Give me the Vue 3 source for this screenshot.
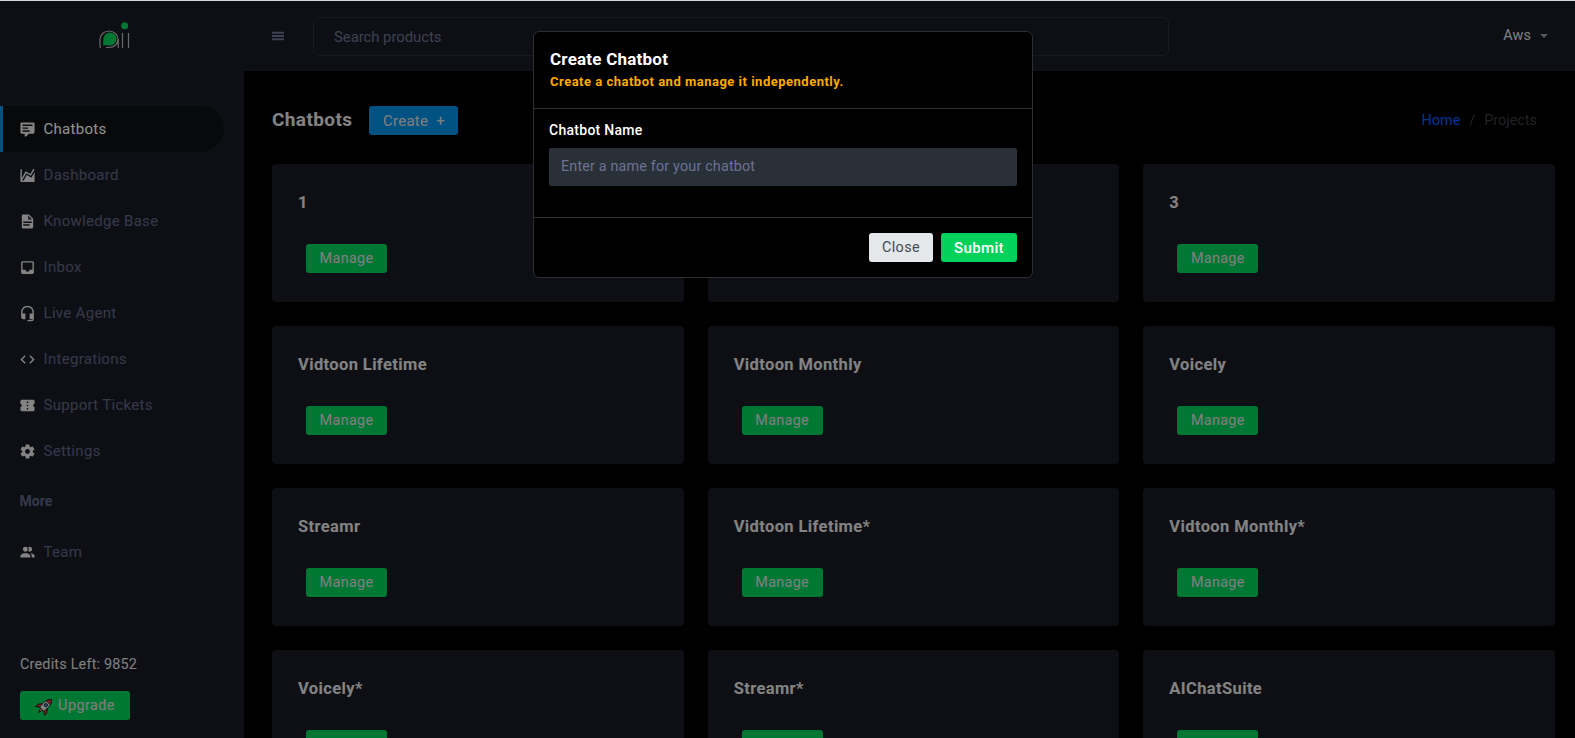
<template>
  <div class="page">
    <aside class="sidebar">
      <div class="brand">
        <svg class="logo" width="32" height="28" viewBox="0 0 32 28">
          <path d="M2.500 26 C1.500 23 2 20 2 17.500 A9 8.500 0 0 1 20 17.500 C20 22 16 25.500 11 25.500 H8 M20.300 17 V26 M24.500 11 V26 M30.500 11 V26" fill="none" stroke="#b8b8b8" stroke-width="1.200" />
          <path d="M5 23.500 L5.500 17 A6.500 6.500 0 1 1 12 23.500 C9.500 23.500 8 23 5 23.500 Z" fill="#00d25b" />
          <circle cx="26.700" cy="3.700" r="3.500" fill="#00d25b" />
        </svg>
      </div>
      <nav class="nav">
        <a v-for="item in mainNav" :key="item.label" class="nav-item" :class="{ active: item.active }">
          <svg class="nav-icon" viewBox="0 0 24 24"><path :d="item.icon" /></svg>
          <span>{{ item.label }}</span>
        </a>
        <p class="nav-heading">More</p>
        <a class="nav-item team">
          <svg class="nav-icon" viewBox="0 0 24 24"><path :d="teamIcon" /></svg>
          <span>Team</span>
        </a>
      </nav>
      <div class="credits">
        <p>Credits Left: 9852</p>
        <button class="btn btn-green upgrade">
          <svg width="20" height="20" viewBox="0 0 24 24">
            <g transform="rotate(45 12 12)" stroke="#111" stroke-width="0.900">
              <path d="M10 17 H14 L12 23 Z" fill="#f39a2b" />
              <path d="M8.500 11 L4.500 16.500 V20.500 L9 17 Z" fill="#d8343a" />
              <path d="M15.500 11 L19.500 16.500 V20.500 L15 17 Z" fill="#d8343a" />
              <path d="M12 1 C16 5 16.500 10 15.500 17.500 H8.500 C7.500 10 8 5 12 1 Z" fill="#e2e4ea" />
              <path d="M12 1 C13.800 2.800 15 4.500 15.500 6.500 H8.500 C9 4.500 10.200 2.800 12 1 Z" fill="#d8343a" />
              <circle cx="12" cy="10.500" r="2" fill="#3b78c2" />
            </g>
          </svg>
          Upgrade
        </button>
      </div>
    </aside>

    <div class="main">
      <header class="topbar">
        <svg class="menu-icon" viewBox="0 0 24 24"><path d="M3,5.500H21V8.500H3V5.500M3,10.500H21V13.500H3V10.500M3,15.500H21V18.500H3V15.500Z" /></svg>
        <div class="search">Search products</div>
        <div class="account">
          <span>Aws</span>
          <i class="caret"></i>
        </div>
      </header>

      <section class="content">
        <div class="page-head">
          <h3>Chatbots</h3>
          <button class="btn btn-blue">Create <span class="plus">+</span></button>
          <div class="crumbs">
            <a>Home</a>
            <span class="slash">/</span>
            <span>Projects</span>
          </div>
        </div>
        <div class="cards">
          <div v-for="name in bots" :key="name" class="card">
            <h4>{{ name }}</h4>
            <button class="btn btn-green manage">Manage</button>
          </div>
        </div>
      </section>
    </div>

    <div class="backdrop"></div>

    <div class="modal">
      <div class="modal-head">
        <h5>Create Chatbot</h5>
        <p>Create a chatbot and manage it independently.</p>
      </div>
      <div class="modal-body">
        <label for="bot-name">Chatbot Name</label>
        <input id="bot-name" type="text" placeholder="Enter a name for your chatbot" />
      </div>
      <div class="modal-foot">
        <button class="btn btn-light">Close</button>
        <button class="btn btn-submit">Submit</button>
      </div>
    </div>

    <div class="edge"></div>
  </div>
</template>

<script setup>
const mainNav = [
  {
    label: "Chatbots",
    active: true,
    icon: "M9,22A1,1 0 0,1 8,21V18H4A2,2 0 0,1 2,16V4C2,2.89 2.9,2 4,2H20A2,2 0 0,1 22,4V16A2,2 0 0,1 20,18H13.9L10.2,21.71C10,21.89 9.75,22 9.5,22V22H9M5,5V7H19V5H5M5,9V11H13V9H5M5,13V15H15V13H5Z",
  },
  {
    label: "Dashboard",
    icon: "M17.45,15.18L22,7.31V19L22,21H2V3H4V15.54L9.5,6L16,9.78L20.24,2.45L21.97,3.45L16.74,12.5L10.23,8.75L4.31,19H6.57L10.96,11.44L17.45,15.18Z",
  },
  {
    label: "Knowledge Base",
    icon: "M13,9H18.5L13,3.5V9M6,2H14L20,8V20A2,2 0 0,1 18,22H6C4.89,22 4,21.1 4,20V4C4,2.89 4.89,2 6,2M15,18V16H6V18H15M18,14V12H6V14H18Z",
  },
  {
    label: "Inbox",
    icon: "M19,15H15A3,3 0 0,1 12,18A3,3 0 0,1 9,15H5V5H19M19,3H5C3.89,3 3,3.9 3,5V19A2,2 0 0,0 5,21H19A2,2 0 0,0 21,19V5A2,2 0 0,0 19,3Z",
  },
  {
    label: "Live Agent",
    icon: "M12,1C7,1 3,5 3,10V17A3,3 0 0,0 6,20H9V12H5V10A7,7 0 0,1 12,3A7,7 0 0,1 19,10V12H15V20H19V21H12V23H18A3,3 0 0,0 21,20V10C21,5 17,1 12,1Z",
  },
  {
    label: "Integrations",
    icon: "M14.6,16.6L19.2,12L14.6,7.4L16,6L22,12L16,18L14.6,16.6M9.4,16.6L4.8,12L9.4,7.4L8,6L2,12L8,18L9.4,16.6Z",
  },
  {
    label: "Support Tickets",
    icon: "M13,8.5H11V6.5H13V8.5M13,13H11V11H13V13M13,17.5H11V15.5H13V17.5M22,10V6C22,4.89 21.1,4 20,4H4A2,2 0 0,0 2,6V10C3.11,10 4,10.9 4,12A2,2 0 0,1 2,14V18A2,2 0 0,0 4,20H20A2,2 0 0,0 22,18V14A2,2 0 0,1 20,12A2,2 0 0,1 22,10Z",
  },
  {
    label: "Settings",
    icon: "M12,15.5A3.5,3.5 0 0,1 8.5,12A3.5,3.5 0 0,1 12,8.5A3.5,3.5 0 0,1 15.5,12A3.5,3.5 0 0,1 12,15.5M19.43,12.97C19.47,12.65 19.5,12.33 19.5,12C19.5,11.67 19.47,11.34 19.43,11L21.54,9.37C21.73,9.22 21.78,8.95 21.66,8.73L19.66,5.27C19.54,5.05 19.27,4.96 19.05,5.05L16.56,6.05C16.04,5.66 15.5,5.32 14.87,5.07L14.5,2.42C14.46,2.18 14.25,2 14,2H10C9.75,2 9.54,2.18 9.5,2.42L9.13,5.07C8.5,5.32 7.96,5.66 7.44,6.05L4.95,5.05C4.73,4.96 4.46,5.05 4.34,5.27L2.34,8.73C2.21,8.95 2.27,9.22 2.46,9.37L4.57,11C4.53,11.34 4.5,11.67 4.5,12C4.5,12.33 4.53,12.65 4.57,12.97L2.46,14.63C2.27,14.78 2.21,15.05 2.34,15.27L4.34,18.73C4.46,18.95 4.73,19.03 4.95,18.95L7.44,17.94C7.96,18.34 8.5,18.68 9.13,18.93L9.5,21.58C9.54,21.82 9.75,22 10,22H14C14.25,22 14.46,21.82 14.5,21.58L14.87,18.93C15.5,18.67 16.04,18.34 16.56,17.94L19.05,18.95C19.27,19.03 19.54,18.95 19.66,18.73L21.66,15.27C21.78,15.05 21.73,14.78 21.54,14.63L19.43,12.97Z",
  },
];

const teamIcon =
  "M16 17V19H2V17S2 13 9 13 16 17 16 17M12.5 7.5A3.5 3.5 0 1 0 9 11A3.5 3.5 0 0 0 12.5 7.5M15.94 13A5.32 5.32 0 0 1 18 17V19H22V17S22 13.37 15.94 13M15 4A3.39 3.39 0 0 0 13.07 4.59A5 5 0 0 1 13.07 10.41A3.39 3.39 0 0 0 15 11A3.5 3.5 0 0 0 15 4Z";

const bots = [
  "1",
  "2",
  "3",
  "Vidtoon Lifetime",
  "Vidtoon Monthly",
  "Voicely",
  "Streamr",
  "Vidtoon Lifetime*",
  "Vidtoon Monthly*",
  "Voicely*",
  "Streamr*",
  "AIChatSuite",
];
</script>

<style>
html,
body {
  margin: 0;
  height: 100%;
  overflow: hidden;
  background: #000;
}
</style>

<style scoped>
.page {
  position: relative;
  display: flex;
  height: 738px;
  overflow: hidden;
  font-family: Roboto, "Liberation Sans", sans-serif;
  font-size: 14.4px;
  color: #fff;
  background: #000;
}

.edge {
  position: absolute;
  top: 0;
  left: 0;
  right: 0;
  height: 1px;
  background: #d8d8d8;
}

/* sidebar */
.sidebar {
  display: flex;
  flex-direction: column;
  flex: 0 0 244px;
  background: #191c24;
}

.brand {
  display: flex;
  justify-content: center;
  height: 106px;
  padding-top: 22px;
  padding-right: 16px;
  box-sizing: border-box;
}

.logo {
  display: block;
}

.nav {
  display: flex;
  flex-direction: column;
  flex: 1;
}

.nav-item {
  display: flex;
  align-items: center;
  gap: 7.500px;
  width: 224px;
  height: 46px;
  padding-left: 19px;
  box-sizing: border-box;
  color: #5f6485;
  font-size: 15px;
  letter-spacing: 0.3px;
}

.nav-item.active {
  padding-left: 16px;
  border-left: 3px solid #0090e7;
  border-radius: 0 23px 23px 0;
  background: #0f1015;
  color: #fff;
}

.nav-icon {
  width: 17px;
  height: 17px;
  fill: #e6e6e6;
  flex: none;
}

.nav-heading {
  margin: 19px 0 0 19.500px;
  height: 24px;
  font-size: 14px;
  font-weight: 700;
  color: #5f6485;
}

.team {
  margin-top: 12px;
}

.credits {
  padding: 0 0 18px 20px;
}

.credits p {
  margin: 0 0 18px;
  padding-top: 1px;
  color: #e0e0e0;
  font-size: 14.4px;
  letter-spacing: 0.2px;
}

.upgrade {
  width: 110px;
  gap: 3px;
  font-size: 15px;
  letter-spacing: 0.45px;
}

/* top */
.main {
  flex: 1;
  min-width: 0;
  display: flex;
  flex-direction: column;
}

.topbar {
  display: flex;
  align-items: center;
  flex: 0 0 71px;
  padding: 0 27px;
  background: #191c24;
}

.menu-icon {
  width: 16px;
  height: 16px;
  margin-left: -1px;
  fill: #6c7293;
  flex: none;
}

.search {
  width: 814px;
  height: 37px;
  margin-left: 27px;
  margin-top: 1px;
  padding: 0 20px;
  line-height: 38px;
  border: 1px solid #2c2e33;
  border-radius: 6px;
  color: #6c7293;
  font-size: 14.800px;
}

.account {
  display: flex;
  align-items: center;
  gap: 9px;
  margin-left: auto;
  color: #e0e0e0;
  font-size: 14.4px;
  letter-spacing: 0.1px;
}

.caret {
  width: 0;
  height: 0;
  border-left: 4px solid transparent;
  border-right: 4px solid transparent;
  border-top: 4px solid #9a9a9a;
}

/* content */
.content {
  padding: 35px 20px 0 28px;
}

.page-head {
  display: flex;
  align-items: center;
  height: 29px;
  margin-bottom: 29px;
}

.page-head h3 {
  margin: -3px 17px 0 0;
  font-size: 19px;
  font-weight: 700;
  letter-spacing: 0.4px;
  color: #e6e6e6;
}

.crumbs {
  display: flex;
  gap: 9px;
  margin-left: auto;
  margin-right: 18px;
  color: #3b3e45;
  font-size: 14.4px;
}

.crumbs a {
  color: #0062ff;
}

.cards {
  display: grid;
  grid-template-columns: repeat(3, 1fr);
  gap: 24px;
}

.card {
  height: 138px;
  padding: 28.500px 26px 0;
  box-sizing: border-box;
  border-radius: 4px;
  background: #191c24;
}

.card h4 {
  margin: 0 0 31.500px;
  height: 20px;
  line-height: 20px;
  font-size: 16.500px;
  font-weight: 700;
  letter-spacing: 0.38px;
  color: #e6e6e6;
}

.btn {
  display: inline-flex;
  align-items: center;
  justify-content: center;
  height: 29px;
  padding: 0;
  border: 0;
  border-radius: 3px;
  font-family: inherit;
  font-size: 14.4px;
  color: #fff;
}

.btn-blue {
  width: 89px;
  background: #0090e7;
  color: #e0e0e0;
  letter-spacing: 0.25px;
  font-size: 15px;
}

.plus {
  margin-left: 8px;
}

.btn-green {
  background: #00d25b;
  color: #e0e0e0;
}

.manage {
  width: 81px;
  margin-left: 8px;
  letter-spacing: 0.32px;
}

/* modal */
.backdrop {
  position: absolute;
  inset: 0;
  background: rgba(0, 0, 0, 0.43);
}

.modal {
  position: absolute;
  top: 31px;
  left: 533px;
  width: 500px;
  box-sizing: border-box;
  border: 1px solid #2c2e33;
  border-radius: 6px;
  background: #000;
}

.modal-head {
  height: 77px;
  padding: 17px 16px 0;
  box-sizing: border-box;
  border-bottom: 1px solid #2c2e33;
}

.modal-head h5 {
  margin: 0;
  height: 21px;
  line-height: 21px;
  font-size: 17px;
  font-weight: 700;
  letter-spacing: 0.22px;
}

.modal-head p {
  margin: 4px 0 0;
  font-size: 13px;
  font-weight: 700;
  letter-spacing: 0.5px;
  color: #ffab00;
}

.modal-body {
  height: 109px;
  padding: 11px 15px 0;
  box-sizing: border-box;
  border-bottom: 1px solid #2c2e33;
}

.modal-body label {
  display: block;
  height: 21px;
  line-height: 20px;
  margin-bottom: 7px;
  font-size: 14px;
  font-weight: 500;
  letter-spacing: 0.28px;
}

.modal-body input {
  display: block;
  width: 100%;
  height: 38px;
  padding: 0 12px 2px;
  box-sizing: border-box;
  border: 0;
  border-radius: 2px;
  background: #2a3038;
  font-family: inherit;
  font-size: 14.4px;
  letter-spacing: 0.15px;
  color: #fff;
}

.modal-body input::placeholder {
  color: #6c7293;
}

.modal-foot {
  display: flex;
  justify-content: flex-end;
  gap: 8px;
  padding: 15px 15px 15px;
}

.btn-light {
  width: 64px;
  background: #e4e8eb;
  color: #3e4b5b;
  letter-spacing: 0.4px;
}

.btn-submit {
  width: 76px;
  background: #00d25b;
  font-size: 15px;
  font-weight: 500;
  letter-spacing: 0.35px;
}
</style>
